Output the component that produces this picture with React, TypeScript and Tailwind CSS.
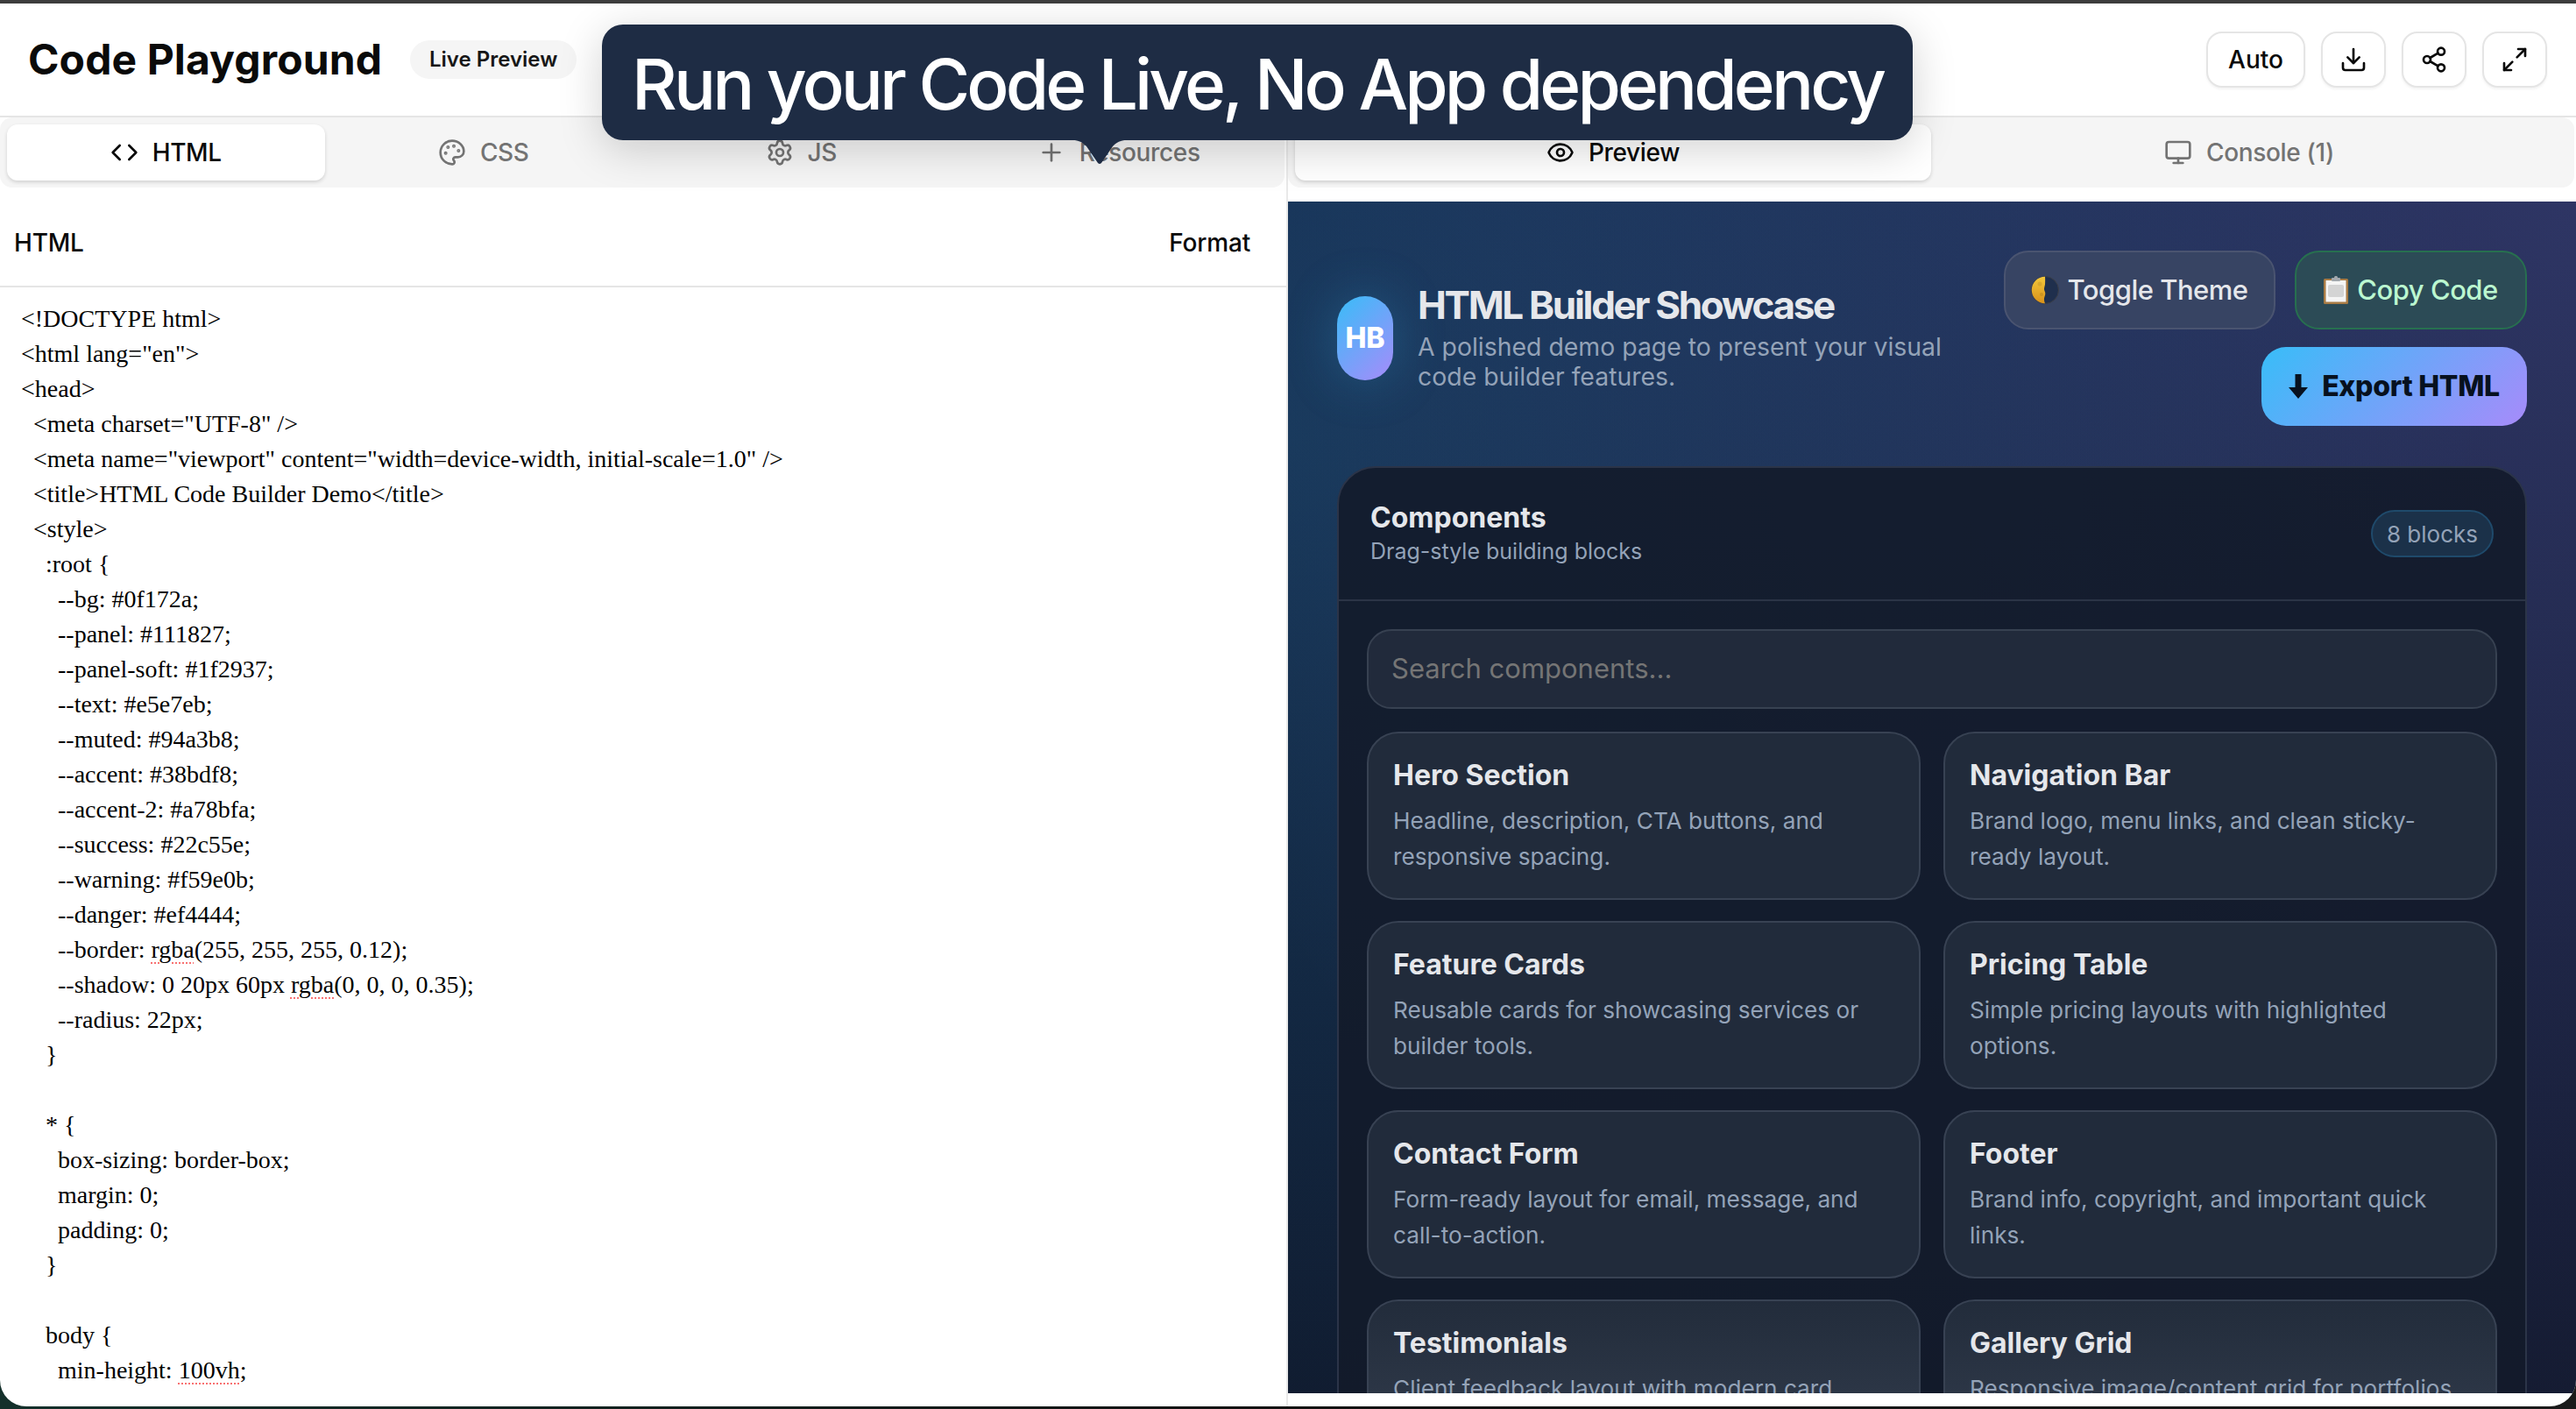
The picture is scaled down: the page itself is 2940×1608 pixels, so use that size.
import {
  Code,
  Download,
  Eye,
  Maximize2,
  Monitor,
  Palette,
  Plus,
  Settings,
  Share2,
} from "lucide-react";

const codeLines = [
  "<!DOCTYPE html>",
  '<html lang="en">',
  "<head>",
  '  <meta charset="UTF-8" />',
  '  <meta name="viewport" content="width=device-width, initial-scale=1.0" />',
  "  <title>HTML Code Builder Demo</title>",
  "  <style>",
  "    :root {",
  "      --bg: #0f172a;",
  "      --panel: #111827;",
  "      --panel-soft: #1f2937;",
  "      --text: #e5e7eb;",
  "      --muted: #94a3b8;",
  "      --accent: #38bdf8;",
  "      --accent-2: #a78bfa;",
  "      --success: #22c55e;",
  "      --warning: #f59e0b;",
  "      --danger: #ef4444;",
  "      --border: rgba(255, 255, 255, 0.12);",
  "      --shadow: 0 20px 60px rgba(0, 0, 0, 0.35);",
  "      --radius: 22px;",
  "    }",
  "",
  "    * {",
  "      box-sizing: border-box;",
  "      margin: 0;",
  "      padding: 0;",
  "    }",
  "",
  "    body {",
  "      min-height: 100vh;",
];

const blocks = [
  ["Hero Section", "Headline, description, CTA buttons, and responsive spacing."],
  ["Navigation Bar", "Brand logo, menu links, and clean sticky-ready layout."],
  ["Feature Cards", "Reusable cards for showcasing services or builder tools."],
  ["Pricing Table", "Simple pricing layouts with highlighted options."],
  ["Contact Form", "Form-ready layout for email, message, and call-to-action."],
  ["Footer", "Brand info, copyright, and important quick links."],
  ["Testimonials", "Client feedback layout with modern card styling."],
  ["Gallery Grid", "Responsive image/content grid for portfolios and more."],
];

const CodeLine = ({ text }: { text: string }) => (
  <div className="h-10 whitespace-pre leading-10">
    {text.split(/(rgba|100vh)/).map((part, i) =>
      part === "rgba" || part === "100vh" ? (
        <span
          key={i}
          className="underline decoration-[#f87171] decoration-dotted decoration-2 underline-offset-[5px]"
        >
          {part}
        </span>
      ) : (
        part
      )
    )}
  </div>
);

const Tab = ({
  icon: Icon,
  label,
  active,
}: {
  icon: typeof Code;
  label: string;
  active?: boolean;
}) => (
  <div
    className={`flex items-center justify-center gap-4 rounded-[12px] text-[28px] font-medium tracking-[-0.35px] ${
      active
        ? "bg-white text-[#0a0a0a] shadow-[0_2px_4px_rgba(0,0,0,0.15)]"
        : "text-[#737373]"
    }`}
  >
    <Icon size={32} />
    {label}
  </div>
);

const IconButton = ({ icon: Icon }: { icon: typeof Code }) => (
  <button className="flex h-[64px] w-[74px] items-center justify-center rounded-[18px] border-2 border-[#e5e5e5] bg-white text-[#0a0a0a] shadow-[0_2px_3px_rgba(0,0,0,0.05)]">
    <Icon size={32} />
  </button>
);

const MoonGlyph = () => (
  <svg width="32" height="32" viewBox="0 0 32 32">
    <defs>
      <linearGradient id="moonGold" x1="0" y1="0" x2="0" y2="1">
        <stop offset="0" stopColor="#f4c93c" />
        <stop offset="1" stopColor="#d9921a" />
      </linearGradient>
    </defs>
    <circle cx="16" cy="16" r="15.5" fill="#1f2f4d" stroke="#3c3f48" strokeWidth="1" />
    <path
      d="M16 .8C7.6.8.8 7.6.8 16s6.8 15.2 15.2 15.2c-1-3-1.6-5-.4-8 1-2.4 1-4-.2-6.5-1-2.5.2-4.5.6-7 .2-3 .2-6 0-9.7z"
      fill="url(#moonGold)"
    />
    <circle cx="10" cy="9" r="2.5" fill="#c89a2c" opacity=".55" />
    <circle cx="12" cy="21" r="2" fill="#b8861d" opacity=".5" />
  </svg>
);

const ClipboardGlyph = () => (
  <svg width="28" height="32" viewBox="0 0 28 32">
    <rect x="0" y="3" width="28" height="29" rx="1.5" fill="#a87b45" />
    <rect x="2.5" y="5" width="23" height="24.5" fill="#f5f5f5" />
    <rect x="5" y="10" width="18" height="14" rx="2" fill="#d4d4d4" />
    <rect x="9" y="2" width="10" height="4" rx="1" fill="#a3a8ad" />
    <rect x="12" y="0" width="4" height="3" rx="1.5" fill="#a3a8ad" />
  </svg>
);

const ArrowGlyph = () => (
  <svg width="22" height="28" viewBox="0 0 22 28">
    <path d="M7.5 0h7v15H22L11 28 0 15h7.5z" fill="#07111f" />
  </svg>
);

export default function App() {
  return (
    <div className="h-[1608px] w-full overflow-hidden bg-[linear-gradient(90deg,#14302b,#111111_50%,#1a1a1a)]">
      <div className="relative flex h-[1605px] flex-col overflow-hidden rounded-b-[30px] border-t-4 border-[#3d3d3d] bg-white font-['Inter',sans-serif]">
        <header className="flex h-[130px] shrink-0 items-center justify-between border-b-2 border-[#e5e5e5] pl-8 pr-[33px]">
          <div className="flex items-center gap-[32px]">
            <h1 className="text-[48px] font-bold tracking-[0.1px] text-[#0a0a0a]">
              Code Playground
            </h1>
            <span className="flex h-[44px] items-center rounded-full bg-[#f5f5f5] px-[22px] text-[24px] font-semibold text-[#171717]">
              Live Preview
            </span>
          </div>
          <div className="flex items-center gap-[18px]">
            <button className="h-[64px] w-[113px] rounded-[18px] border-2 border-[#e5e5e5] bg-white text-[28px] font-medium text-[#0a0a0a] shadow-[0_2px_3px_rgba(0,0,0,0.05)]">
              Auto
            </button>
            <IconButton icon={Download} />
            <IconButton icon={Share2} />
            <IconButton icon={Maximize2} />
          </div>
        </header>

        <main className="flex min-h-0 flex-1">
          <section className="flex w-[1470px] shrink-0 flex-col border-r-2 border-[#e9e9e9]">
            <div className="grid h-[80px] w-[1466px] shrink-0 grid-cols-4 rounded-[14px] bg-[#f5f5f5] p-2">
              <Tab icon={Code} label="HTML" active />
              <Tab icon={Palette} label="CSS" />
              <Tab icon={Settings} label="JS" />
              <Tab icon={Plus} label="Resources" />
            </div>
            <div className="flex h-[114px] shrink-0 items-center justify-between border-b-2 border-[#e5e5e5] pl-4 pr-[41px] pt-[14px] text-[28px] font-medium tracking-[-0.2px] text-[#0a0a0a]">
              <span>HTML</span>
              <button>Format</button>
            </div>
            <div className="min-h-0 flex-1 overflow-hidden pl-6 pt-4 font-['Liberation_Serif',serif] text-[28px] text-black">
              {codeLines.map((line, i) => (
                <CodeLine key={i} text={line} />
              ))}
            </div>
          </section>

          <section className="flex min-w-0 flex-1 flex-col">
            <div className="mr-0.5 grid h-[80px] shrink-0 grid-cols-2 rounded-[14px] bg-[#f5f5f5] p-2">
              <Tab icon={Eye} label="Preview" active />
              <Tab icon={Monitor} label="Console (1)" />
            </div>
            <div className="mt-4 mb-[15px] min-h-0 flex-1 overflow-hidden bg-[radial-gradient(circle_at_0%_20%,rgba(56,189,248,0.16),transparent_75%),radial-gradient(circle_at_100%_0%,rgba(167,139,250,0.2),transparent_85%),linear-gradient(180deg,#10203f,#0f172a)] px-14 pt-14">
              <div className="mb-[46px] flex items-center justify-between">
                <div className="flex items-center gap-7">
                  <div className="flex h-24 w-16 shrink-0 items-center justify-center rounded-[36px] bg-[linear-gradient(135deg,#38bdf8,#a78bfa)] text-[32px] font-extrabold text-white shadow-[0_0_60px_rgba(56,189,248,0.25)]">
                    HB
                  </div>
                  <div className="w-[640px]">
                    <h2 className="mb-2 text-[44px] font-bold leading-[46px] tracking-[-2.3px] text-[#e5e7eb]">
                      HTML Builder Showcase
                    </h2>
                    <p className="text-[28.4px] leading-[34px] text-[#94a3b8]">
                      A polished demo page to present your visual code builder features.
                    </p>
                  </div>
                </div>
                <div className="flex w-[597px] shrink-0 flex-wrap justify-end gap-x-[22px] gap-y-5">
                  <button className="flex h-[90px] w-[310px] items-center justify-center gap-[9px] rounded-[28px] border-2 border-[#4a5470] bg-[#374463] text-[31px] font-medium tracking-[-0.5px] text-[#e5e7eb]">
                    <MoonGlyph />
                    Toggle Theme
                  </button>
                  <button className="flex h-[90px] w-[265px] items-center justify-center gap-[10px] rounded-[28px] border-2 border-[#27704f] bg-[#2c4b56] text-[31px] font-medium tracking-[-0.5px] text-[#bbf7d0]">
                    <ClipboardGlyph />
                    Copy Code
                  </button>
                  <button className="flex h-[90px] w-[303px] items-center justify-center gap-[16px] rounded-[28px] bg-[linear-gradient(135deg,#38bdf8,#a78bfa)] text-[32px] font-extrabold tracking-[-0.3px] text-[#07111f]">
                    <ArrowGlyph />
                    Export HTML
                  </button>
                </div>
              </div>

              <div className="rounded-[44px] border-2 border-[#2b3448] bg-[rgba(19,27,42,0.9)]">
                <div className="flex h-[152px] items-center justify-between border-b-2 border-[#2b3446] px-9">
                  <div>
                    <h3 className="text-[32px] font-bold leading-[40px] text-[#e5e7eb]">
                      Components
                    </h3>
                    <p className="text-[25px] leading-[36px] text-[#94a3b8]">
                      Drag-style building blocks
                    </p>
                  </div>
                  <span className="flex h-[54px] w-[140px] items-center justify-center rounded-full border-2 border-[#1f4a6b] bg-[#1b3149] text-[26px] text-[#94a3b8]">
                    8 blocks
                  </span>
                </div>
                <div className="p-8">
                  <div className="mb-[26px] flex h-[91px] items-center rounded-[28px] border-2 border-[#374151] bg-[#212a3b] px-[26px] text-[31px] text-[#757575]">
                    Search components...
                  </div>
                  <div className="grid grid-cols-2 gap-x-[26px] gap-y-6">
                    {blocks.map(([title, description], i) => (
                      <div
                        key={title}
                        className={`h-[192px] rounded-[36px] border-2 border-[#384253] px-[28px] pt-[28px] ${
                          i > 5
                            ? "bg-[linear-gradient(180deg,#222c3b,#2c3646_107px)]"
                            : "bg-[#212b3b]"
                        }`}
                      >
                        <h4 className="mb-[11px] text-[32px] font-bold leading-[40px] text-[#e5e7eb]">
                          {title}
                        </h4>
                        <p className="text-[26.2px] leading-[41px] text-[#94a3b8]">
                          {description}
                        </p>
                      </div>
                    ))}
                  </div>
                </div>
              </div>
            </div>
          </section>
        </main>

        <div className="absolute left-[687px] top-6 flex h-[132px] w-[1496px] items-center justify-center whitespace-nowrap rounded-[24px] bg-[#1e2c44] pt-1 text-[80px] font-medium tracking-[-3.9px] text-white shadow-[0_10px_50px_rgba(0,0,0,0.18)]">
          Run your Code Live, No App dependency
          <svg
            className="absolute left-[528px] top-[131px]"
            width="80"
            height="29"
            viewBox="0 0 80 29"
          >
            <path d="M0 0H80C68 0 60 2 55 8L42 27Q40 29 38 27L25 8C20 2 12 0 0 0Z" fill="#1e2c44" />
          </svg>
        </div>
      </div>
    </div>
  );
}
